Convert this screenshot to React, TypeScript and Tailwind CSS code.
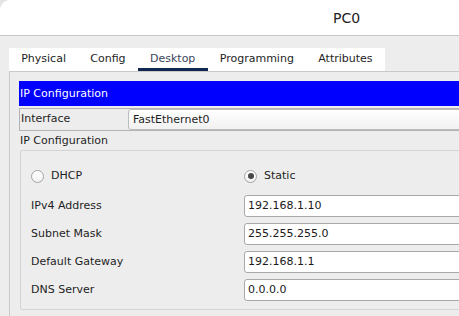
import React from "react";

const tabs = ["Physical", "Config", "Desktop", "Programming", "Attributes"];

const rows = [
  { label: "IPv4 Address", value: "192.168.1.10" },
  { label: "Subnet Mask", value: "255.255.255.0" },
  { label: "Default Gateway", value: "192.168.1.1" },
  { label: "DNS Server", value: "0.0.0.0" },
];

const Radio: React.FC<{ checked?: boolean; label: string }> = ({ checked, label }) => (
  <div className="flex items-center h-[14px]">
    <span className="w-[13px] h-[13px] rounded-full border border-[#a4a4a4] bg-gradient-to-b from-white to-[#f2f2f2] flex items-center justify-center">
      {checked && <span className="w-[6px] h-[6px] rounded-full bg-[#474747]" />}
    </span>
    <span className="ml-[7px]">{label}</span>
  </div>
);

export default function App() {
  return (
    <div
      className="w-[459px] h-[316px] overflow-hidden bg-[#e4e4e4] text-[11px] text-[#1e1e1e]"
      style={{ fontFamily: '"DejaVu Sans", Verdana, sans-serif' }}
    >
      {/* title bar */}
      <div className="h-[36px] bg-white rounded-tl-[10px] border-b border-[#c6c6c6] pl-[333px] pt-[10px] text-[14px] leading-[16px] text-[#222]">
        PC0
      </div>

      <div className="bg-[#ededed] h-[280px] pl-[9px] pt-[12px]">
        {/* tabs */}
        <div className="flex w-fit h-[23px] bg-white">
          {tabs.map((t) => (
            <div
              key={t}
              className={`relative px-[12.2px] pt-[4px] leading-[13px] ${
                t === "Desktop" ? "text-[#3a4660]" : "text-[#1e1e1e]"
              }`}
            >
              {t}
              {t === "Desktop" && (
                <span className="absolute left-0 right-0 bottom-0 h-[3px] bg-[#10284f]" />
              )}
            </div>
          ))}
        </div>

        {/* panel */}
        <div className="w-[470px] h-[260px] border-l border-t border-[#c9c9c9] pl-[9px] pt-[9px]">
          <div className="h-[25px] bg-[#0000ff] text-white pl-[1px] leading-[25px]">IP Configuration</div>

          <div className="mt-[2px] h-[23px] flex items-center border-y border-l border-[#b3b3b3] bg-[#ededed]">
            <span className="w-[108px] pl-[1px]">Interface</span>
            <div className="flex-1 h-[21px] rounded-l-[3px] border border-[#bcbcbc] bg-gradient-to-b from-white to-[#f1f1f1] pl-[4px] leading-[19px]">
              FastEthernet0
            </div>
          </div>

          <div className="h-[19px] pl-[1px] leading-[20px]">IP Configuration</div>

          <div className="h-[160px] ml-[1px] border border-[#d4d4d4] rounded-[2px] pl-[10px] pt-[18px]">
            <div className="grid grid-cols-[213px_1fr]">
              <Radio label="DHCP" />
              <Radio checked label="Static" />
            </div>
            <div className="mt-[12px] flex flex-col gap-[6px]">
              {rows.map((r) => (
                <div key={r.label} className="grid grid-cols-[213px_1fr] items-center">
                  <span>{r.label}</span>
                  <div className="h-[22px] rounded-[3px] border border-[#a9a9a9] bg-white pl-[3px] leading-[20px] text-[#1a1a1a]">
                    {r.value}
                  </div>
                </div>
              ))}
            </div>
          </div>
        </div>
      </div>
    </div>
  );
}
